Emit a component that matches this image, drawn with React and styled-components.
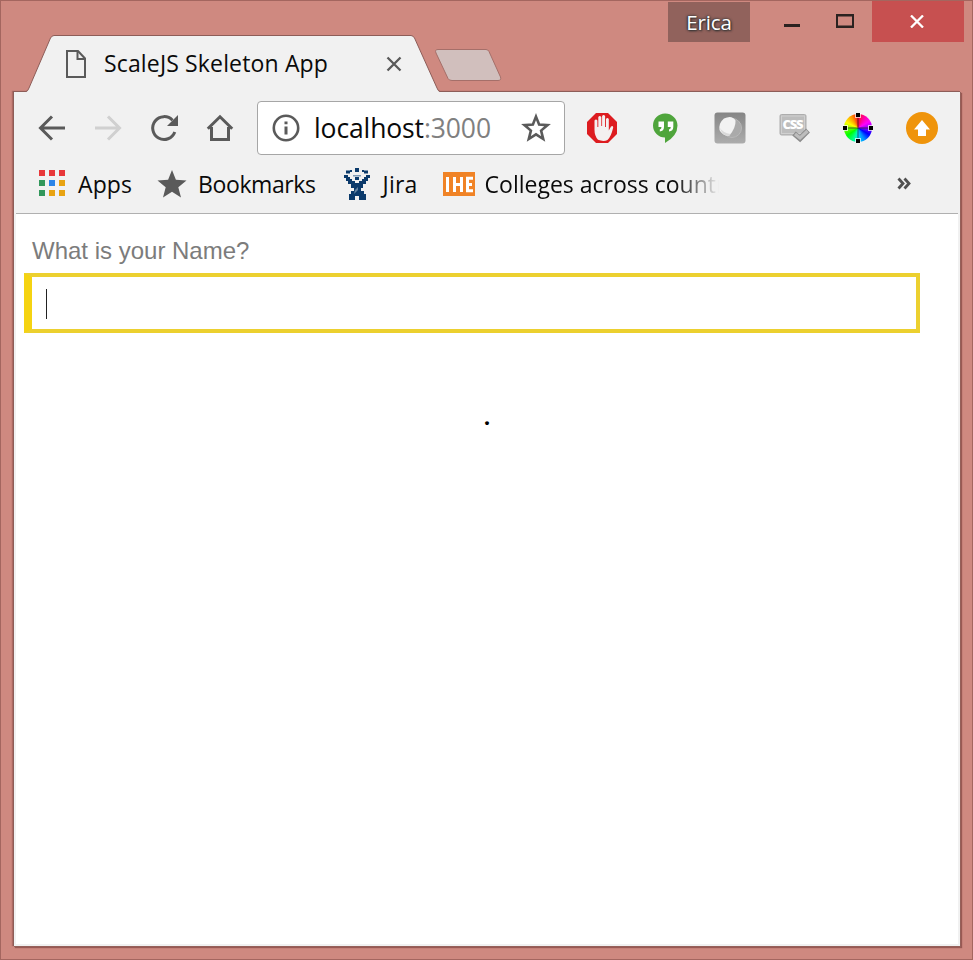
import React from "react";
import styled, { createGlobalStyle } from "styled-components";

const GlobalStyle = createGlobalStyle`
  * { box-sizing: border-box; }
  body { margin: 0; background: #cf8980; }
  svg { display: block; flex: none; }
`;

const Frame = styled.div`
  display: flex;
  flex-direction: column;
  width: 973px;
  height: 960px;
  overflow: hidden;
  background: #cf8980;
  box-shadow: inset 0 0 0 1px #a4665f;
  font-family: "Open Sans", "Noto Sans", sans-serif;
  color: #0a0a0a;
`;

const TitleBar = styled.header`
  display: flex;
  flex: none;
  height: 91px;
  padding: 0 9px 0 26px;
`;

const Tab = styled.div`
  display: grid;
  align-self: flex-end;
  width: 414px;
  height: 57px;
  margin-bottom: -1px;
  position: relative;
  z-index: 1;
  > * { grid-area: 1 / 1; }
`;

const TabContent = styled.div`
  display: flex;
  align-items: center;
  padding: 0 38px 0 40px;
`;

const Label = styled.span`
  font-size: ${(p) => p.$size || 23}px;
  line-height: 32px;
  letter-spacing: ${(p) => p.$track || 0}px;
  margin-left: ${(p) => p.$gap || 0}px;
  white-space: nowrap;
`;

const TabTitle = styled(Label)`
  padding-bottom: 2px;
`;

const TabClose = styled.svg`
  margin-left: auto;
`;

const NewTab = styled.svg`
  align-self: flex-end;
  margin: 0 0 9px -6px;
`;

const Controls = styled.div`
  display: flex;
  align-items: flex-start;
  margin-left: auto;
`;

const UserBadge = styled.div`
  width: 82px;
  height: 40px;
  margin: 2px 21px 0 0;
  background: #91625c;
  color: #fff;
  font-size: 20.5px;
  line-height: 40px;
  letter-spacing: -0.1px;
  text-align: center;
  text-shadow: 0 0 3px #333, 1px 1px 2px #333, -1px 0 2px #444;
`;

const WindowButton = styled.div`
  display: flex;
  align-items: center;
  justify-content: center;
  width: ${(p) => p.$width}px;
  height: 41px;
  margin-top: 1px;
  padding: 0 2px 1px 0;
  background: ${(p) => (p.$danger ? "#c75050" : "transparent")};
`;

const Panel = styled.main`
  display: flex;
  flex-direction: column;
  flex: 1;
  margin: 0 13px 14px 13px;
  border: solid #8d5d58;
  border-width: 1px 0 0 1px;
  background: #f1f1f1;
  box-shadow: 1px 1px 0 #95605a, 2px 2px 1px rgba(110, 50, 45, 0.55),
    -1px 0 1px rgba(110, 50, 45, 0.35);
`;

const Toolbar = styled.div`
  display: flex;
  align-items: center;
  height: 72px;
  padding: 0 22px 0 22px;
`;

const Nav = styled.div`
  display: flex;
  align-items: center;
  gap: 24px;
`;

const AddressBar = styled.div`
  display: flex;
  align-items: center;
  width: 308px;
  height: 54px;
  margin-left: 21px;
  padding: 0 12px 0 14px;
  background: #fff;
  border: 1px solid #a6a6a6;
  border-radius: 4px;
`;

const Port = styled.span`
  color: #808080;
`;

const BookmarkStar = styled.svg`
  margin-left: auto;
`;

const Extensions = styled.div`
  display: flex;
  align-items: center;
  gap: 32px;
  margin-left: auto;
`;

const Wheel = styled.div`
  display: grid;
  place-items: center;
  width: 32px;
  height: 32px;
  > * { grid-area: 1 / 1; }
`;

const WheelDisc = styled.div`
  width: 28px;
  height: 28px;
  border-radius: 50%;
  background: conic-gradient(#ff1020, #ff00a0 30deg, #f0f 60deg, #90f 88deg, #00f 120deg,
    #08f 150deg, #0df 180deg, #0f9 200deg, #0f0 235deg, #7f0 268deg, #ff0 295deg, #f90 330deg, #ff1020);
`;

const Bookmarks = styled.nav`
  display: flex;
  align-items: center;
  height: 49px;
  padding: 0 49px 9px 22px;
`;

const Bookmark = styled.div`
  display: flex;
  align-items: center;
  margin-right: ${(p) => p.$after}px;
`;

const Fading = styled.div`
  margin: 0 -30px 0 10px;
  mask-image: linear-gradient(to right, #000 190px, transparent 234px);
`;

const Overflow = styled.svg`
  margin-left: auto;
`;

const Page = styled.section`
  display: flex;
  flex-direction: column;
  flex: 1;
  margin: 0 2px 2px;
  border-top: 1px solid #b0b0b0;
  background: #fff;
`;

const Question = styled.label`
  margin: 21px 0 0 16px;
  font: 24px/32px "Liberation Sans", Arial, sans-serif;
  color: #7c7c7c;
`;

const NameField = styled.div`
  display: flex;
  align-items: center;
  width: 896px;
  height: 60px;
  margin: 6px 0 0 8px;
  padding: 1px 0 0 14px;
  border: 4px solid #ecd02f;
  border-left: 8px solid #f5d311;
`;

const Caret = styled.div`
  width: 1px;
  height: 30px;
  background: #222;
`;

const Dot = styled.p`
  margin: 68px 0 0;
  font: bold 24px/32px "Liberation Serif", "Times New Roman", serif;
  color: #000;
  text-align: center;
`;

const NavIcon = ({ children, color = "#5a5a5a" }) => (
  <svg width="32" height="32" viewBox="0 0 32 32" fill="none" stroke={color} strokeWidth="3">
    {children}
  </svg>
);

const appColors = ["#e8383a", "#e8383a", "#e8383a", "#32975b", "#2a84e8", "#e8a312", "#32975b", "#e8a312", "#e8a312"];

const AppsIcon = () => (
  <svg width="32" height="32">
    {appColors.map((c, i) => (
      <rect key={i} x={3 + (i % 3) * 10} y={2 + Math.floor(i / 3) * 10} width="6" height="6" fill={c} />
    ))}
  </svg>
);

export default function App() {
  return (
    <>
      <GlobalStyle />
      <Frame>
        <TitleBar>
          <Tab>
            <svg width="414" height="57">
              <path
                d="M0 57 Q2 56 3 53 L24.5 3 Q26 .5 28 .5 H385 Q387 .5 388.5 3 L411 53 Q412 56.5 414 57Z"
                fill="#f1f1f1"
              />
              <path
                d="M0 56.5 Q2 56 3 53 L24.5 3 Q26 .5 28 .5 H385 Q387 .5 388.5 3 L411 53 Q412 56 414 56.5"
                fill="none"
                stroke="#8d5d58"
              />
            </svg>
            <TabContent>
              <svg width="20" height="28" fill="none" stroke="#5a5a5a" strokeWidth="2">
                <path d="M1 1H12L19 8.5V27H1Z" />
                <path d="M11.5 1V9H19" />
              </svg>
              <TabTitle $gap={18} $track={0.15}>ScaleJS Skeleton App</TabTitle>
              <TabClose width="16" height="16" stroke="#5a5a5a" strokeWidth="2.3">
                <path d="M1.5 1.5L14.5 14.5M14.5 1.5L1.5 14.5" />
              </TabClose>
            </TabContent>
          </Tab>
          <NewTab width="68" height="34">
            <path
              d="M4 1.5H52Q54 1.5 55 3.5L66.5 29Q67.5 32.5 64 32.5H18Q15 32.5 14 30.5L2 5Q.5 1.5 4 1.5Z"
              fill="#d1bfbd"
              stroke="#a56f69"
            />
          </NewTab>
          <Controls>
            <UserBadge>Erica</UserBadge>
            <WindowButton $width={44}>
              <svg width="16" height="14"><rect y="10" width="16" height="3" fill="#2b2220" /></svg>
            </WindowButton>
            <WindowButton $width={57}>
              <svg width="22" height="14" fill="none" stroke="#2b2220" strokeWidth="2">
                <path d="M4 1.25H22M4 12.75H22" strokeWidth="2.5" />
                <path d="M5 0V14M21 0V14" />
              </svg>
            </WindowButton>
            <WindowButton $width={92} $danger>
              <svg width="14" height="13" stroke="#fff" strokeWidth="2.3">
                <path d="M1 .5L13 12.5M13 .5L1 12.5" />
              </svg>
            </WindowButton>
          </Controls>
        </TitleBar>
        <Panel>
          <Toolbar>
            <Nav>
              <NavIcon><path d="M29 16H5M16 4.5L4.5 16L16 27.5" /></NavIcon>
              <NavIcon color="#d0d0d0"><path d="M3 16H27M16 4.5L27.5 16L16 27.5" /></NavIcon>
              <NavIcon>
                <path d="M26.8 20A11.4 11.4 0 1 1 24.5 8.3" />
                <path d="M30 3V14H19Z" fill="#5a5a5a" stroke="none" />
              </NavIcon>
              <NavIcon><path d="M3.8 16.8L16 4.8L28.2 16.8M7.5 15V27.5H24.5V15" /></NavIcon>
            </Nav>
            <AddressBar>
              <svg width="28" height="28" fill="none" stroke="#5a5a5a" strokeWidth="2.6">
                <circle cx="14" cy="14" r="12.2" />
                <path d="M14 12.5V20.5M14 7.5V10.3" strokeWidth="3" />
              </svg>
              <Label $size={26.5} $track={-0.12} $gap={14}>localhost<Port>:3000</Port></Label>
              <BookmarkStar width="32" height="32" fill="none" stroke="#5a5a5a" strokeWidth="2.6">
                <path d="M16 4.6L19.1 12.5L27.6 13.1L21.1 18.6L23.2 27L16 22.4L8.8 27L10.9 18.6L4.4 13.1L12.9 12.5Z" />
              </BookmarkStar>
            </AddressBar>
            <Extensions>
              <svg width="32" height="32" viewBox="0 0 32 32">
                <path d="M10 1H22L31 10V22L22 31H10L1 22V10Z" fill="#dd1c20" />
                <path
                  d="M8.5 18V8.5Q10 6.5 11.4 8.5V15H12.3V5Q13.8 2.8 15.3 5V14H16.1V4Q17.6 2 19.1 4V15H20V7Q21.3 5 22.8 7V18.5L25 14.5Q27.2 13 27.2 15.5Q25 25 21.5 28Q17.5 30 12 27.8Q8.5 24 8.5 18Z"
                  fill="#f4f0f0"
                />
              </svg>
              <svg width="32" height="32" viewBox="0 0 32 32">
                <path d="M15 1.5A12 12 0 0 0 15 25.5V31Q27.5 24 27.5 13.5A12.2 12.2 0 0 0 15 1.5Z" fill="#4fa53c" />
                <path d="M8.5 9.5H14V15Q14 19 9.8 19.5V17.5Q11.5 17 11.5 15H8.5ZM17.8 9.5H23.3V15Q23.3 19 19 19.5V17.5Q20.8 17 20.8 15H17.8Z" fill="#fff" />
              </svg>
              <svg width="32" height="32" viewBox="0 0 32 32">
                <defs>
                  <linearGradient id="tile" x2="0" y2="1">
                    <stop stopColor="#858585" />
                    <stop offset="1" stopColor="#adadad" />
                  </linearGradient>
                </defs>
                <rect x=".5" y=".5" width="31" height="31" rx="3" fill="url(#tile)" />
                <circle cx="18" cy="16" r="9.5" fill="#aaa" stroke="#b8b8b8" />
                <path d="M10 6.5Q18 2.5 21.5 8.5Q22 16 15 24Q8 23.5 5.5 18Q4.5 11 10 6.5Z" fill="#f2f2f2" />
                <path d="M6 16Q9 21 16.5 22L14.8 24Q8 23.5 6 16Z" fill="#d8d8d8" />
              </svg>
              <svg width="32" height="32" viewBox="0 0 32 32">
                <rect x="2" y="2.5" width="26" height="20.5" rx="1.5" fill="#bdbdbd" stroke="#adadad" />
                <rect x="3.5" y="4" width="23" height="17.5" fill="none" stroke="#d0d0d0" />
                <text x="15" y="17.3" textAnchor="middle" textLength="21" fontFamily="Open Sans" fontWeight="800" fontSize="13" fill="#fff">CSS</text>
                <path d="M16 21.5L22 26.5L30 18.5" fill="none" stroke="#8d8d8d" strokeWidth="5.5" />
                <path d="M17 22L22 26L29.5 19" fill="none" stroke="#bdbdbd" strokeWidth="3.2" />
              </svg>
              <Wheel>
                <WheelDisc />
                <svg width="32" height="32">
                  <path d="M16 6V26M6 16H26" stroke="#222" strokeWidth="1" opacity=".7" />
                  <path d="M13 3.5H19M13 28.5H19M3.5 13V19M28.5 13V19" stroke="#fff" strokeWidth="5" opacity=".7" />
                  <path d="M16 1V5M16 27V31M1 16H5M27 16H31" stroke="#000" strokeWidth="4" />
                </svg>
              </Wheel>
              <svg width="32" height="32">
                <circle cx="16" cy="16" r="16" fill="#ef940b" />
                <path d="M16 8L24 17.5H20V24H12V17.5H8Z" fill="#fff" />
              </svg>
            </Extensions>
          </Toolbar>
          <Bookmarks>
            <Bookmark $after={24}>
              <AppsIcon />
              <Label $gap={10} $track={0.1}>Apps</Label>
            </Bookmark>
            <Bookmark $after={25}>
              <svg width="32" height="32" fill="#5a5a5a">
                <path d="M16 2L19.9 11.8L30.5 12.5L22.3 19.2L25 29.5L16 23.8L7 29.5L9.7 19.2L1.5 12.5L12.1 11.8Z" />
              </svg>
              <Label $gap={10} $track={-0.4}>Bookmarks</Label>
            </Bookmark>
            <Bookmark $after={25}>
              <svg width="32" height="32" fill="#0b3a6b">
                <path d="M3 7H7V9H9V11H11V13H14V15H18V13H21V11H23V9H25V7H29V10H27V13H25V16H22V20H20V23H23V26H25V32H18V28H14V32H8V26H10V23H13V20H10V16H7V13H5V10H3Z" />
                <path d="M5 2.5H9V5.5H5ZM14 0H18V4H14ZM23 2.5H27V5.5H23ZM9 2H11V4H9ZM21 2H23V4H21ZM14 9H18V12H14Z" />
                <path d="M12 7H20V8.5H12Z" fill="#7f9ab5" />
                <path d="M14 22L17 19V22L13 26Z" fill="#6484a3" />
              </svg>
              <Label $gap={10} $track={0.2}>Jira</Label>
            </Bookmark>
            <Bookmark>
              <svg width="32" height="24">
                <rect width="32" height="24" fill="#f08326" />
                <path
                  d="M4.5 5V20M11.5 5V20M18.5 5V20M11.5 12.5H18.5M24.5 5V20M23 6.3H30M24.5 12.5H29M23 18.7H30"
                  stroke="#fff"
                  strokeWidth="3"
                />
              </svg>
              <Fading><Label>Colleges across countr</Label></Fading>
            </Bookmark>
            <Overflow width="14" height="14" fill="none" stroke="#505050" strokeWidth="2.8">
              <path d="M1.5 1.5L6 6.5L1.5 11.5M7.5 1.5L12 6.5L7.5 11.5" />
            </Overflow>
          </Bookmarks>
          <Page>
            <Question>What is your Name?</Question>
            <NameField><Caret /></NameField>
            <Dot>.</Dot>
          </Page>
        </Panel>
      </Frame>
    </>
  );
}
